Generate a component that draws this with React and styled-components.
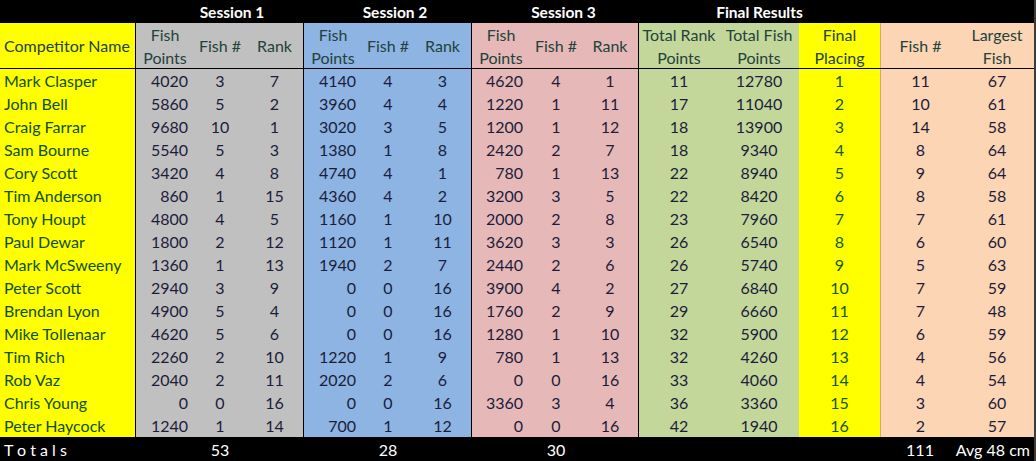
import React from "react";
import styled, { createGlobalStyle } from "styled-components";

/* css */
const GlobalStyle = createGlobalStyle`
    html, body {
        margin: 0;
        padding: 0;
        background: #ffffff;
    }
    body {
        font-family: Lato, "Open Sans", "Liberation Sans", sans-serif;
    }
`;

const COLS = "136px 58px 52px 58px 58px 52px 58px 58px 52px 57px 80px 80px 81px 80px 74px";

const GREY = "#c0c0c0",
    BLUE = "#8db4e2",
    PINK = "#e6b9b8",
    GREEN = "#c4d79b",
    YELLOW = "#ffff00",
    PEACH = "#fcd5b4";

const Sheet = styled.div`
    width: 1034px;
    border-right: 2px solid #3c3c3c;
    font-size: 16px;
`;

const Row = styled.div`
    display: grid;
    grid-template-columns: ${COLS};
    grid-template-rows: ${p => p.$h}px;
    height: ${p => p.$h}px;
    overflow: hidden;
    background: ${p => p.$dark ? "#000" : "transparent"};
    border-bottom: ${p => p.$line ? "1px solid #000" : "none"};
`;

const Title = styled.div`
    grid-column: ${p => p.$span};
    display: flex;
    align-items: center;
    justify-content: center;
    padding-left: ${p => p.$shift * 2}px;
    color: #fff;
    font-weight: 700;
    font-size: 15.5px;
`;

const Cell = styled.div`
    display: flex;
    align-items: center;
    justify-content: ${p => p.$align === "left" ? "flex-start" : p.$align === "right" ? "flex-end" : "center"};
    padding: 0 ${p => p.$pad || 4}px;
    background: ${p => p.$bg};
    color: ${p => p.$color || "#1c1c3c"};
    border-right: ${p => p.$edge ? "1px solid #000" : "none"};
    border-left: ${p => p.$seam ? "1px solid #d8a57c" : "none"};
    white-space: nowrap;
    overflow: visible;
`;

const HeadCell = styled(Cell)`
    text-align: ${p => p.$align === "left" ? "left" : "center"};
    line-height: 23px;
    padding: 0 ${p => p.$align === "left" ? 4 : 0}px;
    color: #23423c;
`;

const TotalCell = styled.div`
    display: flex;
    align-items: center;
    justify-content: ${p => p.$align === "left" ? "flex-start" : p.$align === "right" ? "flex-end" : "center"};
    padding: 0 4px;
    color: #fff;
    white-space: nowrap;
    overflow: visible;
`;

/* column definitions */
const columns = [
    { head: ["Competitor Name"], bg: YELLOW, align: "left", edge: true, color: "#0f4f18" },
    { head: ["Fish", "Points"], bg: GREY, align: "right", pad: 6 },
    { head: ["Fish #"], bg: GREY },
    { head: ["Rank"], bg: GREY, edge: true },
    { head: ["Fish", "Points"], bg: BLUE, align: "right", pad: 6 },
    { head: ["Fish #"], bg: BLUE },
    { head: ["Rank"], bg: BLUE, edge: true },
    { head: ["Fish", "Points"], bg: PINK, align: "right", pad: 7 },
    { head: ["Fish #"], bg: PINK },
    { head: ["Rank"], bg: PINK, edge: true },
    { head: ["Total Rank", "Points"], bg: GREEN },
    { head: ["Total Fish", "Points"], bg: GREEN },
    { head: ["Final", "Placing"], bg: YELLOW, color: "#0f5a14" },
    { head: ["Fish #"], bg: PEACH, seam: true },
    { head: ["Largest", "Fish"], bg: PEACH },
];

const rows = [
    ["Mark Clasper", 4020, 3, 7, 4140, 4, 3, 4620, 4, 1, 11, 12780, 1, 11, 67],
    ["John Bell", 5860, 5, 2, 3960, 4, 4, 1220, 1, 11, 17, 11040, 2, 10, 61],
    ["Craig Farrar", 9680, 10, 1, 3020, 3, 5, 1200, 1, 12, 18, 13900, 3, 14, 58],
    ["Sam Bourne", 5540, 5, 3, 1380, 1, 8, 2420, 2, 7, 18, 9340, 4, 8, 64],
    ["Cory Scott", 3420, 4, 8, 4740, 4, 1, 780, 1, 13, 22, 8940, 5, 9, 64],
    ["Tim Anderson", 860, 1, 15, 4360, 4, 2, 3200, 3, 5, 22, 8420, 6, 8, 58],
    ["Tony Houpt", 4800, 4, 5, 1160, 1, 10, 2000, 2, 8, 23, 7960, 7, 7, 61],
    ["Paul Dewar", 1800, 2, 12, 1120, 1, 11, 3620, 3, 3, 26, 6540, 8, 6, 60],
    ["Mark McSweeny", 1360, 1, 13, 1940, 2, 7, 2440, 2, 6, 26, 5740, 9, 5, 63],
    ["Peter Scott", 2940, 3, 9, 0, 0, 16, 3900, 4, 2, 27, 6840, 10, 7, 59],
    ["Brendan Lyon", 4900, 5, 4, 0, 0, 16, 1760, 2, 9, 29, 6660, 11, 7, 48],
    ["Mike Tollenaar", 4620, 5, 6, 0, 0, 16, 1280, 1, 10, 32, 5900, 12, 6, 59],
    ["Tim Rich", 2260, 2, 10, 1220, 1, 9, 780, 1, 13, 32, 4260, 13, 4, 56],
    ["Rob Vaz", 2040, 2, 11, 2020, 2, 6, 0, 0, 16, 33, 4060, 14, 4, 54],
    ["Chris Young", 0, 0, 16, 0, 0, 16, 3360, 3, 4, 36, 3360, 15, 3, 60],
    ["Peter Haycock", 1240, 1, 14, 700, 1, 12, 0, 0, 16, 42, 1940, 16, 2, 57],
];

const totals = ["T o t a l s", "", "53", "", "", "28", "", "", "30", "", "", "", "", "111", "Avg 48 cm"];

const App = function App() {
    return <>
        <GlobalStyle />
        <Sheet>
            <Row $h={23} $dark>
                <Title $span="2 / 5" $shift={12}>Session 1</Title>
                <Title $span="5 / 8" $shift={7}>Session 2</Title>
                <Title $span="8 / 11" $shift={8}>Session 3</Title>
                <Title $span="11 / 14" $shift={0}>Final Results</Title>
            </Row>
            <Row $h={45} $line>
                {columns.map((c, i) => (
                    <HeadCell key={i} $bg={c.bg} $align={i === 0 ? "left" : "center"}
                        $edge={c.edge} $seam={c.seam}>
                        <span>
                            {c.head.map((line, li) => <React.Fragment key={li}>
                                {li > 0 && <br />}{line}
                            </React.Fragment>)}
                        </span>
                    </HeadCell>
                ))}
            </Row>
            {rows.map((r, ri) => (
                <Row key={ri} $h={23}>
                    {r.map((v, i) => {
                        let c = columns[i];
                        return <Cell key={i} $bg={c.bg} $align={c.align} $pad={c.pad}
                            $color={c.color} $edge={c.edge} $seam={c.seam}>{v}</Cell>;
                    })}
                </Row>
            ))}
            <Row $h={24} $dark>
                {totals.map((t, i) => (
                    <TotalCell key={i} $align={i === 0 ? "left" : i === 14 ? "right" : "center"}>
                        {t}
                    </TotalCell>
                ))}
            </Row>
        </Sheet>
    </>;
};

export default App;
